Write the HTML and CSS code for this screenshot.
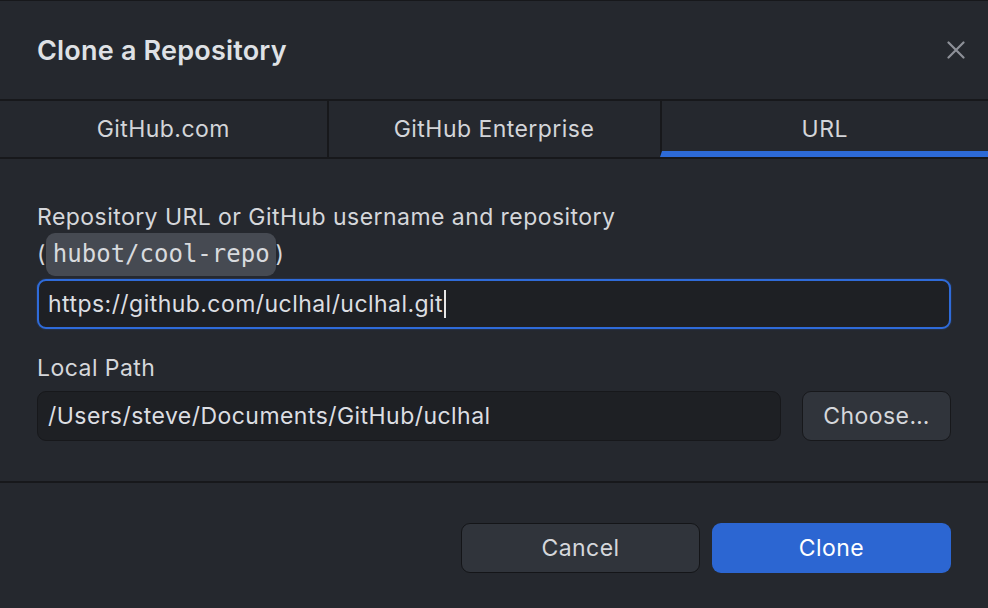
FILE: index.html
```html
<!DOCTYPE html>
<html lang="en">
<head>
<meta charset="utf-8">
<title>Clone a Repository</title>
<link rel="stylesheet" href="styles.css">
</head>
<body>
<div class="dialog">
  <header class="dialog-header">
    <h1 class="title">Clone a Repository</h1>
    <button class="close" aria-label="Close">
      <svg width="18" height="18" viewBox="0 0 18 18"><path d="M1.5 1.5 L16.5 16.5 M16.5 1.5 L1.5 16.5" stroke="#8d9098" stroke-width="2.2" stroke-linecap="round"/></svg>
    </button>
  </header>
  <nav class="tabs">
    <div class="tab">GitHub.com</div>
    <div class="tab">GitHub Enterprise</div>
    <div class="tab tab-active">URL</div>
  </nav>
  <section class="content">
    <div class="label label-multi">Repository URL or GitHub username and repository<br>(<code class="chip">hubot/cool-repo</code>)</div>
    <div class="field field-focus">https://github.com/uclhal/uclhal.git<span class="caret"></span></div>
    <div class="label label-path">Local Path</div>
    <div class="path-row">
      <div class="field field-path">/Users/steve/Documents/GitHub/uclhal</div>
      <button class="btn btn-choose">Choose…</button>
    </div>
  </section>
  <footer class="footer">
    <button class="btn btn-footer btn-cancel">Cancel</button>
    <button class="btn btn-footer btn-primary">Clone</button>
  </footer>
</div>
</body>
</html>
```
FILE: styles.css
```css
* { box-sizing: border-box; }
html, body { margin: 0; padding: 0; }
body {
  background: #25282e;
  color: #d5d7db;
  font-family: Inter, "Noto Sans", "Liberation Sans", sans-serif;
  font-size: 23px;
  letter-spacing: 0.45px;
  width: 988px;
  height: 608px;
  overflow: hidden;
}
.dialog {
  border-top: 1px solid #17181b;
}
.dialog-header {
  height: 100px;
  border-bottom: 2px solid #17181b;
  display: flex;
  align-items: center;
  justify-content: space-between;
  padding: 0 23px 0 37px;
}
.title {
  margin: 0;
  font-size: 27px;
  font-weight: 600;
  color: #dfe1e5;
  letter-spacing: 0.2px;
}
.close {
  background: none;
  border: 0;
  padding: 0;
  width: 18px;
  height: 18px;
  display: flex;
}
.tabs {
  display: flex;
  height: 58px;
  border-bottom: 2px solid #17181b;
}
.tab {
  flex: 1;
  display: flex;
  align-items: center;
  justify-content: center;
  color: #d3d5d9;
}
.tab + .tab { border-left: 2px solid #17181b; }
.tab:nth-child(2) { flex: 0 0 333px; }
.tab-active {
  border-bottom: 6px solid #2d6ad6;
  padding-top: 6px;
}
.content {
  padding: 40px 37px 40px;
  border-bottom: 2px solid #17181b;
}
.label {
  color: #d5d7db;
}
.label-multi { line-height: 37px; }
.chip {
  font-family: "DejaVu Sans Mono", "Liberation Mono", monospace;
  font-size: 24px;
  letter-spacing: 0;
  background: #464a52;
  border-radius: 9px;
  padding: 7px 6px 8px 7px;
  color: #d8dade;
}
.field {
  height: 50px;
  display: flex;
  align-items: center;
  color: #dcdee2;
  background: #1e2024;
  border-radius: 9px;
}
.field-focus {
  margin-top: 6px;
  border: 2px solid #2f6bd9;
  padding-left: 9px;
  box-shadow: 0 0 2px rgba(47,107,217,0.5);
}
.caret {
  display: inline-block;
  width: 2px;
  height: 28px;
  background: #e6e6e6;
  margin-left: 1px;
}
.label-path {
  margin-top: 27px;
  line-height: 24px;
}
.path-row {
  margin-top: 11px;
  display: flex;
  gap: 21px;
}
.field-path {
  flex: 1;
  height: 50px;
  border: 1px solid #17181b;
  padding-left: 10px;
}
.btn {
  font-family: inherit;
  font-size: 23px;
  letter-spacing: 0.45px;
  color: #d5d7db;
  border-radius: 9px;
  cursor: default;
}
.btn-choose {
  width: 149px;
  height: 50px;
  background: #30343b;
  border: 1px solid #17181b;
}
.footer {
  display: flex;
  justify-content: flex-end;
  gap: 12px;
  padding: 40px 37px 0;
}
.btn-footer {
  width: 239px;
  height: 50px;
}
.btn-cancel {
  background: #30343b;
  border: 1.5px solid #141518;
}
.btn-primary {
  background: #2c66d2;
  border: 0;
  color: #ffffff;
}
```
